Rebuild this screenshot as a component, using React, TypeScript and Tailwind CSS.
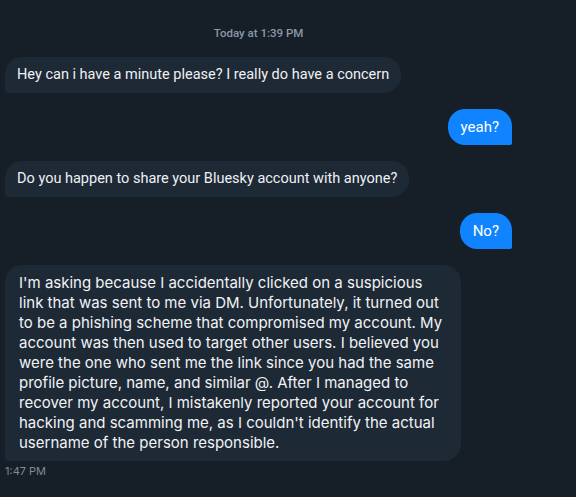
import React from 'react';

type Msg = { from: 'them' | 'me'; lines: string[]; long?: boolean };

const messages: Msg[] = [
  { from: 'them', lines: ['Hey can i have a minute please? I really do have a concern'] },
  { from: 'me', lines: ['yeah?'] },
  { from: 'them', lines: ['Do you happen to share your Bluesky account with anyone?'] },
  { from: 'me', lines: ['No?'] },
  {
    from: 'them',
    long: true,
    lines: [
      "I'm asking because I accidentally clicked on a suspicious",
      'link that was sent to me via DM. Unfortunately, it turned out',
      'to be a phishing scheme that compromised my account. My',
      'account was then used to target other users. I believed you',
      'were the one who sent me the link since you had the same',
      'profile picture, name, and similar @. After I managed to',
      'recover my account, I mistakenly reported your account for',
      "hacking and scamming me, as I couldn't identify the actual",
      'username of the person responsible.',
    ],
  },
];

const Bubble: React.FC<{ msg: Msg }> = ({ msg }) => {
  const mine = msg.from === 'me';
  let cls =
    'self-start rounded-[17px] rounded-bl-[2px] bg-[#1e2936] px-[12px] py-2 text-[14.5px] leading-5 text-[#eef1f4] whitespace-nowrap font-["Roboto",sans-serif]';
  if (mine) {
    cls =
      'self-end rounded-[17px] rounded-br-[2px] bg-[#1083fe] px-[13px] py-2 text-[15px] leading-5 text-white whitespace-nowrap font-["Roboto",sans-serif]';
  } else if (msg.long) {
    cls =
      'self-start w-[456px] rounded-[17px] rounded-bl-[2px] bg-[#1e2936] pl-[14px] pr-[12px] py-2 text-[15px] leading-5 text-[#f1f3f5] whitespace-nowrap font-["Inter",sans-serif]';
  }
  return (
    <div className={cls}>
      {msg.lines.map((l, i) => (
        <div key={i}>{l}</div>
      ))}
    </div>
  );
};

export default function App() {
  return (
    <div className="min-h-screen bg-[#161e27] font-['Inter',sans-serif] antialiased">
      <div className="ml-[5px] flex w-[507px] flex-col pt-[25px]">
        <div className="text-center font-['Roboto',sans-serif] text-[11.5px] font-medium leading-4 text-[#8b98a9]">
          Today at 1:39 PM
        </div>
        <div className="mt-4 flex flex-col gap-4">
          {messages.map((m, i) => (
            <Bubble key={i} msg={m} />
          ))}
        </div>
        <div className="mt-[3px] text-[11px] leading-[14px] text-[#7d8a9b]">1:47 PM</div>
      </div>
    </div>
  );
}
